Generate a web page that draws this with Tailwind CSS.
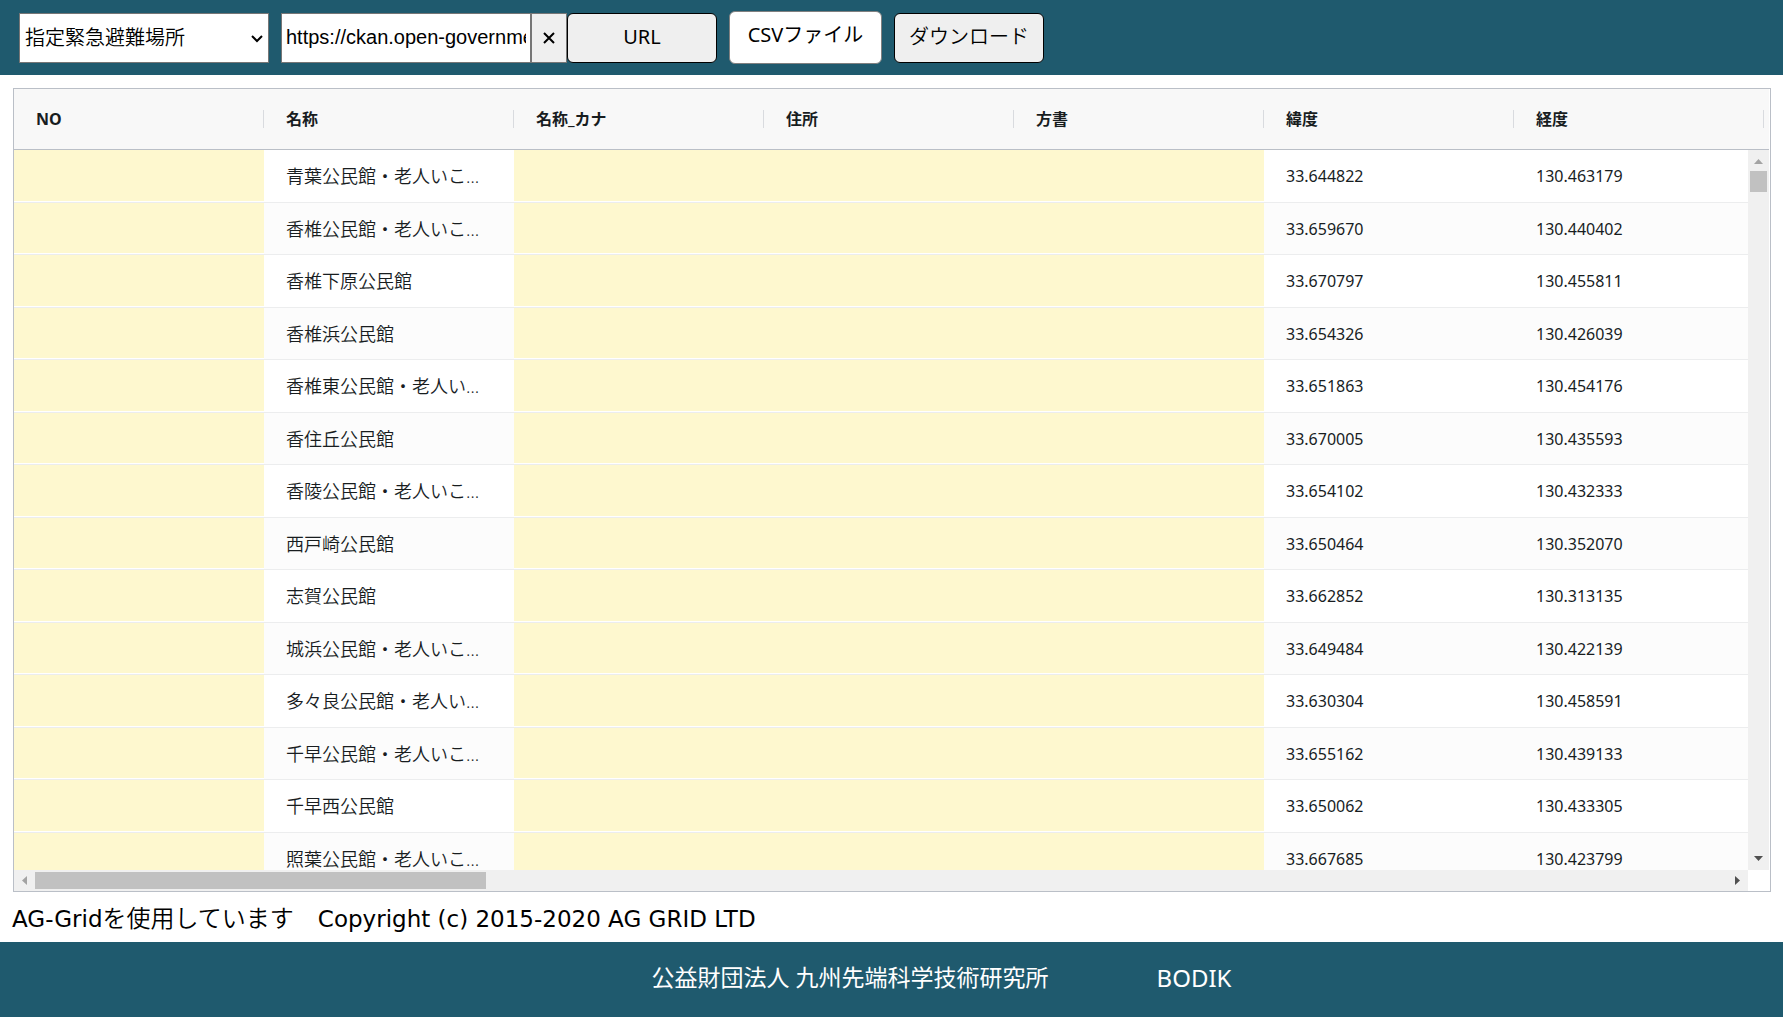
<!DOCTYPE html>
<html lang="ja">
<head>
    <meta charset="UTF-8">
    <meta name="viewport" content="width=device-width, initial-scale=1.0">
    <title>指定緊急避難場所 | BODIK</title>
    <script src="https://cdn.jsdelivr.net/npm/@tailwindcss/browser@4"></script>
</head>
<body class="h-screen flex flex-col bg-white text-black font-['Noto_Sans','Noto_Sans_CJK_JP',sans-serif]">

    <!-- ツールバー -->
    <header class="h-[75px] shrink-0 flex items-center gap-3 pl-[19px] bg-[#1f5a6e] text-xl">
        <div class="relative">
            <select aria-label="データセット" class="block appearance-none w-[250px] h-[50px] pl-[5px] bg-white border border-[#767676] font-[350]">
                <option>指定緊急避難場所</option>
            </select>
            <svg class="absolute right-[6px] top-[22px] w-3 h-2 pointer-events-none" viewBox="0 0 12 8" fill="none" stroke="black" stroke-width="2"><path d="M1 1l5 5 5-5"/></svg>
        </div>
        <div class="flex items-center">
            <input type="text" aria-label="CSVのURL" value="https://ckan.open-governmentdata.org/dataset/" class="w-[250px] h-[50px] px-1 bg-white border border-[#767676] font-['Liberation_Sans',sans-serif]">
            <button type="button" aria-label="クリア" class="w-9 h-[50px] flex items-center justify-center bg-[#efefef] border border-[#767676]">
                <svg class="w-3 h-3" viewBox="0 0 12 12" fill="none" stroke="black" stroke-width="2"><path d="M1 1l10 10M11 1L1 11"/></svg>
            </button>
            <button type="button" class="w-[150px] h-[50px] pb-0.5 bg-[#efefef] border border-black rounded-md">URL</button>
        </div>
        <label for="csvFile" class="w-[153px] h-[53px] pb-1.5 flex items-center justify-center bg-white border border-[#808080] rounded-md">CSVファイル</label>
        <input type="file" id="csvFile" accept=".csv" class="hidden">
        <button type="button" class="w-[150px] h-[50px] pb-0.5 bg-[#efefef] border border-black rounded-md font-[350]">ダウンロード</button>
    </header>

    <!-- データ一覧 -->
    <main class="flex-1 min-h-0 mt-[13px] ml-[13px] mr-3 pr-px flex flex-col relative border border-[#babfc7] text-[#181d1f]">
        <div class="flex-1 min-h-0 overflow-hidden">
            <table class="w-[2000px] table-fixed border-separate border-spacing-0 text-left">
                <thead id="gridHead" class="bg-[#f8f8f8]"></thead>
                <tbody id="gridBody"></tbody>
            </table>
        </div>

        <!-- 横スクロールバー -->
        <div class="h-[21px] mr-[21px] shrink-0 flex items-center justify-between px-2 bg-[#f0f0f0]">
            <div class="flex items-center gap-2">
                <svg class="w-[5px] h-[9px]" viewBox="0 0 5 9" fill="#a3a3a3"><path d="M5 0v9L0 4.5z"/></svg>
                <div class="w-[451px] h-[17px] bg-[#c1c1c1]"></div>
            </div>
            <svg class="w-[5px] h-[9px]" viewBox="0 0 5 9" fill="#505050"><path d="M0 0v9l5-4.5z"/></svg>
        </div>

        <!-- 縦スクロールバー -->
        <div class="absolute top-[61px] bottom-[21px] right-px w-[21px] py-[9px] flex flex-col items-center justify-between bg-[#f0f0f0]">
            <div class="flex flex-col items-center gap-[7px]">
                <svg class="w-[9px] h-[5px]" viewBox="0 0 9 5" fill="#a3a3a3"><path d="M0 5h9L4.5 0z"/></svg>
                <div class="w-[17px] h-[21px] bg-[#c1c1c1]"></div>
            </div>
            <svg class="w-[9px] h-[5px]" viewBox="0 0 9 5" fill="#505050"><path d="M0 0h9L4.5 5z"/></svg>
        </div>
    </main>

    <p class="h-[50px] shrink-0 pl-3 pt-1 flex items-center text-[23px] whitespace-pre font-['DejaVu_Sans','Noto_Sans_CJK_JP',sans-serif]">AG-Grid<span class="text-2xl font-[350]">を使用しています　</span>Copyright (c) 2015-2020 AG GRID LTD</p>

    <footer class="h-[75px] shrink-0 flex items-center justify-center gap-[108px] pl-[100px] pb-1 bg-[#1f5a6e] text-white">
        <span class="text-[23px]">公益財団法人 九州先端科学技術研究所</span>
        <span class="text-2xl">BODIK</span>
    </footer>

    <script>
        const columns = ['NO', '名称', '名称_カナ', '住所', '方書', '緯度', '経度', ''];
        const rows = [
            ['青葉公民館・老人いこいの家', '33.644822', '130.463179'],
            ['香椎公民館・老人いこいの家', '33.659670', '130.440402'],
            ['香椎下原公民館', '33.670797', '130.455811'],
            ['香椎浜公民館', '33.654326', '130.426039'],
            ['香椎東公民館・老人いこいの家', '33.651863', '130.454176'],
            ['香住丘公民館', '33.670005', '130.435593'],
            ['香陵公民館・老人いこいの家', '33.654102', '130.432333'],
            ['西戸崎公民館', '33.650464', '130.352070'],
            ['志賀公民館', '33.662852', '130.313135'],
            ['城浜公民館・老人いこいの家', '33.649484', '130.422139'],
            ['多々良公民館・老人いこいの家', '33.630304', '130.458591'],
            ['千早公民館・老人いこいの家', '33.655162', '130.439133'],
            ['千早西公民館', '33.650062', '130.433305'],
            ['照葉公民館・老人いこいの家', '33.667685', '130.423799']
        ];

        // 値のない必須項目は黄色で表示する
        const emptyCell = '<td class="border-b border-[#ecedee] bg-[#fef8cf] shadow-[inset_0_-1px_0_#ffffff]"></td>';
        const nameCell = v => `<td class="px-[22px] border-b border-[#ecedee] text-lg leading-6 font-[350]"><div class="w-[200px] truncate">${v}</div></td>`;
        const numCell = v => `<td class="px-[22px] border-b border-[#ecedee] text-base leading-6">${v}</td>`;

        document.getElementById('gridHead').innerHTML = '<tr class="h-[61px]">' + columns.map(c => `
            <th class="p-0 border-b border-[#babfc7]">
                <div class="h-[18px] pl-[22px] flex items-center border-r border-[#d9dbdf] text-base font-bold">${c}</div>
            </th>`).join('') + '</tr>';

        document.getElementById('gridBody').innerHTML = rows.map(([name, lat, lng]) => `
            <tr class="odd:h-[53px] even:h-[52px] even:bg-[#fcfcfc]">
                ${emptyCell}${nameCell(name)}${emptyCell}${emptyCell}${emptyCell}${numCell(lat)}${numCell(lng)}
                <td class="border-b border-[#ecedee]"></td>
            </tr>`).join('');
    </script>
</body>
</html>
